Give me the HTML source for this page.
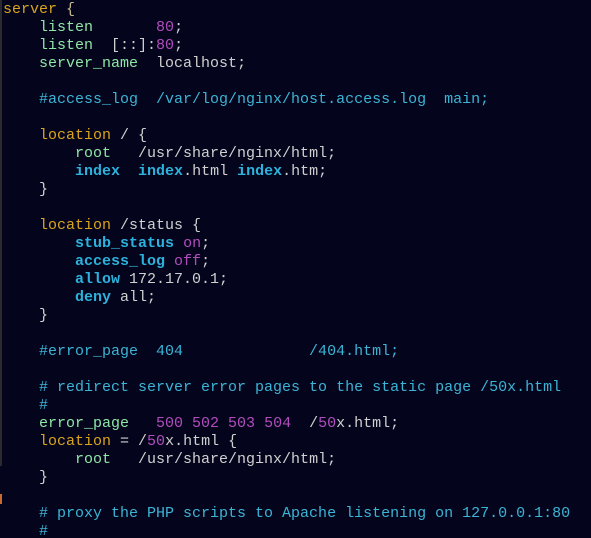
<!DOCTYPE html>
<html><head><style>
html,body{margin:0;padding:0;background:#04051c;width:591px;height:538px;overflow:hidden}
pre{margin:0;padding:1px 0 0 3px;font-family:"Liberation Mono",monospace;font-size:15px;line-height:18px;color:#d0d0d0;letter-spacing:0px}
.k{color:#d9a41e}.d{color:#8fe6a6}.c{color:#3cb4d6}.n{color:#b24cbe}.b{color:#2cb2dc;font-weight:bold}
#bar{position:absolute;left:0;top:0;width:2px;height:466px;background:#2a2a30}
#o{position:absolute;left:0;top:494px;width:2px;height:10px;background:#c86a30}
</style></head><body>
<div id="bar"></div><div id="o"></div>
<pre><span class="k">server</span> <span style="color:#c8b890">{</span>
    <span class="d">listen</span>       <span class="n">80</span>;
    <span class="d">listen</span>  [::]:<span class="n">80</span>;
    <span class="d">server_name</span>  localhost;

    <span class="c">#access_log  /var/log/nginx/host.access.log  main;</span>

    <span class="k">location</span> / {
        <span class="d">root</span>   /usr/share/nginx/html;
        <span class="b">index</span>  <span class="b">index</span>.html <span class="b">index</span>.htm;
    }

    <span class="k">location</span> /status {
        <span class="b">stub_status</span> <span class="n">on</span>;
        <span class="b">access_log</span> <span class="n">off</span>;
        <span class="b">allow</span> 172.17.0.1;
        <span class="b">deny</span> all;
    }

    <span class="c">#error_page  404              /404.html;</span>

    <span class="c"># redirect server error pages to the static page /50x.html</span>
    <span class="c">#</span>
    <span class="d">error_page</span>   <span class="n">500 502 503 504</span>  /<span class="n">50</span>x.html;
    <span class="k">location</span> = /<span class="n">50</span>x.html {
        <span class="d">root</span>   /usr/share/nginx/html;
    }

    <span class="c"># proxy the PHP scripts to Apache listening on 127.0.0.1:80</span>
    <span class="c">#</span>
</pre>
</body></html>
